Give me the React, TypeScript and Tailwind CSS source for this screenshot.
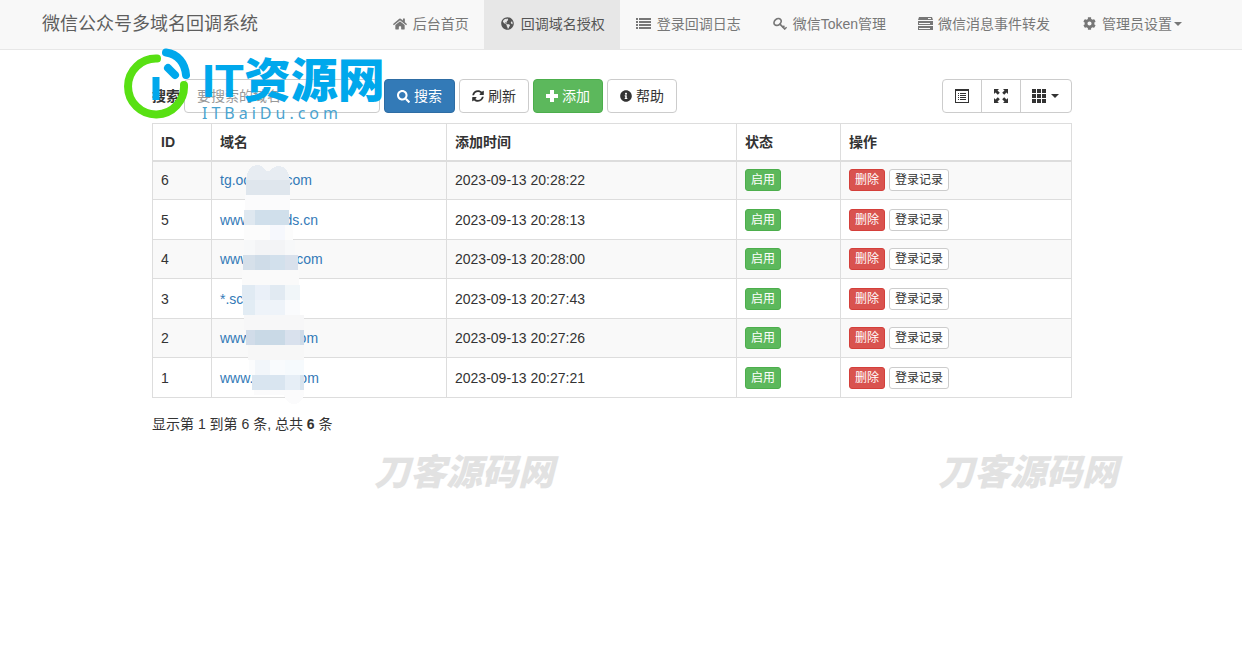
import React from 'react';
import { FaCog, FaGlobeAmericas, FaHome, FaInfoCircle, FaSearch, FaSyncAlt } from 'react-icons/fa';

interface DomainRow {
  id: number;
  domain: string;
  addTime: string;
}

const rows: DomainRow[] = [
  { id: 6, domain: 'tg.ocaaaa.com', addTime: '2023-09-13 20:28:22' },
  { id: 5, domain: 'www.xxxxids.cn', addTime: '2023-09-13 20:28:13' },
  { id: 4, domain: 'www.aaaaa.com', addTime: '2023-09-13 20:28:00' },
  { id: 3, domain: '*.scaaa.com', addTime: '2023-09-13 20:27:43' },
  { id: 2, domain: 'www.aaaai.com', addTime: '2023-09-13 20:27:26' },
  { id: 1, domain: 'www.aaaat.com', addTime: '2023-09-13 20:27:21' },
];

// x, y, width, height, colour
const mosaic: [number, number, number, number, string][] = [
  [4, 15, 44, 15, '#dfe6ed'],
  [3, 30, 45, 15, '#fbfbfc'],
  [2, 45, 11, 15, '#dfe8f0'],
  [13, 45, 34, 15, '#d0dfeb'],
  [2, 60, 49, 15, '#fcfcfc'],
  [28, 60, 15, 15, '#f6f8fd'],
  [2, 75, 51, 15, '#f7f8f9'],
  [13, 75, 30, 15, '#f3f4f6'],
  [1, 90, 12, 15, '#d6e0ea'],
  [13, 90, 15, 15, '#cfdce8'],
  [28, 90, 15, 15, '#d2e0ec'],
  [43, 90, 13, 15, '#d9e1ec'],
  [0, 105, 57, 15, '#fafafa'],
  [0, 120, 13, 15, '#e0eaf3'],
  [13, 120, 15, 15, '#eaf0f8'],
  [28, 120, 15, 15, '#e1eaf2'],
  [43, 120, 15, 15, '#f1f6f9'],
  [1, 135, 12, 15, '#e2ecf4'],
  [13, 135, 30, 15, '#eef3f9'],
  [43, 135, 15, 15, '#fafbfd'],
  [2, 150, 60, 15, '#f7f7f8'],
  [4, 165, 9, 15, '#d1dce9'],
  [13, 165, 30, 15, '#c9d9e6'],
  [43, 165, 15, 15, '#d9e1ed'],
  [58, 165, 4, 15, '#cfdbe8'],
  [6, 180, 56, 15, '#f7f7f7'],
  [7, 195, 6, 15, '#fbfcfd'],
  [13, 195, 15, 15, '#f2f6fa'],
  [28, 195, 15, 15, '#f9fbfd'],
  [43, 195, 19, 15, '#f6fafd'],
  [10, 210, 33, 15, '#d9e5f0'],
  [43, 210, 15, 15, '#e6eef6'],
  [58, 210, 4, 15, '#d8e4ee'],
  [12, 225, 50, 5, '#fbfbfc'],
];

const ListIcon = () => (
  <svg width="15" height="12" viewBox="0 0 15 12" fill="currentColor">
    <path d="M0 0h2v2H0zM3 0h12v2H3zM0 3h2v2H0zM3 3h12v2H3zM0 6h2v2H0zM3 6h12v2H3zM0 9h2v2H0zM3 9h12v2H3z" />
  </svg>
);

const KeyIcon = () => (
  <svg width="14" height="14" viewBox="0 0 14 14" fill="none" stroke="currentColor">
    <ellipse cx="4.6" cy="5" rx="3.9" ry="3" strokeWidth="1.7" transform="rotate(-40 4.6 5)" />
    <path d="M6.6 6.8l5.400 5.400" strokeWidth="1.7" />
    <path d="M9.600 10.600l1.800-1.800M11.300 12.500l2.300-2.300" strokeWidth="1.500" />
  </svg>
);

const ServerIcon = () => (
  <svg width="15" height="13" viewBox="0 0 15 13" fill="currentColor" fillRule="evenodd">
    <path d="M1 0h13l1 3H0zM10 1v1h3V1zM0 4h15v4H0zM1 6v1h11V6zM0 9h15v4H0zM1 11v1h11v-1z" />
  </svg>
);

const PlusIcon = () => (
  <svg width="12" height="12" viewBox="0 0 12 12" fill="currentColor">
    <path d="M4 0h4v4h4v4H8v4H4V8H0V4h4z" />
  </svg>
);

const ToggleIcon = () => (
  <svg width="14" height="14" viewBox="0 0 14 14" fill="currentColor" fillRule="evenodd">
    <path d="M0 0h14v14H0zM1 2v11h12V2z" />
    <path d="M3 4h1v1H3zM5 4h6v1H5zM3 6h1v1H3zM5 6h6v1H5zM3 8h1v1H3zM5 8h6v1H5zM3 10h1v1H3zM5 10h6v1H5z" />
  </svg>
);

const FullscreenIcon = () => (
  <svg width="14" height="14" viewBox="0 0 14 14" fill="currentColor">
    <path d="M0 0h5L3.500 1.500l2.300 2.300-2 2L1.500 3.500 0 5zM14 0v5l-1.500-1.500-2.300 2.300-2-2 2.300-2.300L9 0zM0 14V9l1.500 1.500 2.300-2.300 2 2-2.300 2.300L5 14zM14 14H9l1.500-1.500-2.300-2.300 2-2 2.300 2.300L14 9z" />
  </svg>
);

const GridIcon = () => (
  <svg width="14" height="14" viewBox="0 0 14 14" fill="currentColor">
    <path d="M0 0h4v4H0zM5 0h4v4H5zM10 0h4v4h-4zM0 5h4v4H0zM5 5h4v4H5zM10 5h4v4h-4zM0 10h4v4H0zM5 10h4v4H5zM10 10h4v4h-4z" />
  </svg>
);

const Caret = () => (
  <svg width="8" height="4" viewBox="0 0 8 4" fill="currentColor">
    <path d="M0 0h8L4 4z" />
  </svg>
);

const navItems = [
  { label: '后台首页', icon: <FaHome size={14} /> },
  { label: '回调域名授权', icon: <FaGlobeAmericas size={13} />, active: true },
  { label: '登录回调日志', icon: <ListIcon /> },
  { label: '微信Token管理', icon: <KeyIcon /> },
  { label: '微信消息事件转发', icon: <ServerIcon /> },
  { label: '管理员设置', icon: <FaCog size={13} />, dropdown: true },
];

const Navbar: React.FC = () => (
  <nav className="border-b border-[#e7e7e7] bg-[#f8f8f8] pr-[18px]">
    <div className="mx-auto flex max-w-[1170px] items-stretch justify-between">
      <a href="#" className="px-[15px] pt-[14px] text-lg leading-[21px] whitespace-nowrap text-[#5e5e5e]">
        微信公众号多域名回调系统
      </a>
      <ul className="flex">
        {navItems.map((item) => (
          <li key={item.label}>
            <a
              href="#"
              className={
                item.active
                  ? 'flex h-[49px] items-center bg-[#e7e7e7] px-[15px] pb-0.5 whitespace-nowrap text-[#555]'
                  : 'flex h-[49px] items-center px-[15px] pb-0.5 whitespace-nowrap text-[#777]'
              }
            >
              <span className="mr-1 flex w-[18px] justify-center">{item.icon}</span>
              <span className={item.dropdown ? 'mr-0.5' : ''}>{item.label}</span>
              {item.dropdown && <Caret />}
            </a>
          </li>
        ))}
      </ul>
    </div>
  </nav>
);

const Toolbar: React.FC = () => (
  <div className="flex items-center justify-between">
    <form className="flex items-center gap-1">
      <label htmlFor="kw" className="font-bold whitespace-nowrap">搜索</label>
      <input
        id="kw"
        type="text"
        placeholder="要搜索的域名"
        className="h-[34px] w-[196px] rounded border border-[#ccc] bg-white px-3 placeholder:text-[#999]"
      />
      <button type="button" className="flex h-[34px] items-center gap-1 rounded border border-[#2e6da4] bg-[#337ab7] px-3 whitespace-nowrap text-white">
        <FaSearch size={13} />搜索
      </button>
      <button type="button" className="flex h-[34px] items-center gap-1 rounded border border-[#ccc] bg-white px-3 whitespace-nowrap">
        <FaSyncAlt size={12} />刷新
      </button>
      <button type="button" className="flex h-[34px] items-center gap-1 rounded border border-[#4cae4c] bg-[#5cb85c] px-3 whitespace-nowrap text-white">
        <PlusIcon />添加
      </button>
      <button type="button" className="flex h-[34px] items-center gap-1 rounded border border-[#ccc] bg-white px-3 whitespace-nowrap">
        <FaInfoCircle size={12} />帮助
      </button>
    </form>
    <div className="flex h-[34px] divide-x divide-[#ccc] rounded border border-[#ccc]">
      <button type="button" aria-label="切换" className="flex items-center px-3">
        <ToggleIcon />
      </button>
      <button type="button" aria-label="全屏" className="flex items-center px-3">
        <FullscreenIcon />
      </button>
      <button type="button" aria-label="列" className="flex items-center gap-1 pr-3 pl-[11px]">
        <GridIcon />
        <span className="ml-px"><Caret /></span>
      </button>
    </div>
  </div>
);

const DomainTable: React.FC = () => (
  <div className="relative mt-[10px]">
    <table className="w-full table-fixed border-collapse border border-[#ddd] text-left">
      <thead>
        <tr className="h-[37px] border-b-2 border-[#ddd]">
          <th className="w-[59px] border-x border-[#ddd] px-2">ID</th>
          <th className="w-[235px] border-x border-[#ddd] px-2">域名</th>
          <th className="w-[290px] border-x border-[#ddd] px-2">添加时间</th>
          <th className="w-[104px] border-x border-[#ddd] px-2">状态</th>
          <th className="border-x border-[#ddd] px-2">操作</th>
        </tr>
      </thead>
      <tbody>
        {rows.map((row) => (
          <tr key={row.id} className="h-[39px] odd:bg-[#f9f9f9] even:h-[40px]">
            <td className="border border-[#ddd] px-2">{row.id}</td>
            <td className="border border-[#ddd] px-2">
              <a href="#" className="text-[#337ab7]">{row.domain}</a>
            </td>
            <td className="border border-[#ddd] px-2">{row.addTime}</td>
            <td className="border border-[#ddd] px-2">
              <button type="button" className="block h-[22px] rounded-[3px] border border-[#4cae4c] bg-[#5cb85c] px-[5px] text-xs text-white">
                启用
              </button>
            </td>
            <td className="border border-[#ddd] px-2">
              <div className="flex gap-1">
                <button type="button" className="h-[22px] rounded-[3px] border border-[#d43f3a] bg-[#d9534f] px-[5px] text-xs text-white">
                  删除
                </button>
                <button type="button" className="h-[22px] rounded-[3px] border border-[#ccc] bg-white px-[5px] text-xs">
                  登录记录
                </button>
              </div>
            </td>
          </tr>
        ))}
      </tbody>
    </table>
    {/* Mosaic over the domains */}
    <svg className="absolute top-[42px] left-[90px]" width="64" height="240" viewBox="0 0 64 240" shapeRendering="crispEdges">
      <path d="M4 15C5 4 10 0 15 0c5 0 7 3 9 6h4c2-3 5-5 9-5 6 0 10 5 11 14z" fill="#e7ecf2" />
      <circle cx="52" cy="229" r="10" fill="#fbfbfc" />
      {mosaic.map(([x, y, w, h, fill]) => (
        <rect key={`${x}-${y}`} x={x} y={y} width={w} height={h} fill={fill} />
      ))}
    </svg>
  </div>
);

const SiteLogo: React.FC = () => (
  <div className="pointer-events-none absolute top-[46px] left-[124px] flex gap-3 text-[#00a8ec]">
    <svg width="66" height="74" viewBox="0 0 66 74" fill="none" strokeLinecap="round">
      <path d="M33 12.500A28 28 0 1 0 60 39" stroke="#58e013" strokeWidth="8" />
      <path d="M42 6.500C54 8 61 17 62 29" stroke="#00a8ec" strokeWidth="8" />
      <path d="M44 22l7 7" stroke="#00a8ec" strokeWidth="8" />
      <path d="M32 31v23" stroke="#00a8ec" strokeWidth="7" strokeLinecap="butt" />
    </svg>
    <div className="pt-3 whitespace-nowrap">
      <div className="text-[47px] leading-[46px] font-black">IT资源网</div>
      <div className="font-['Noto_Sans',sans-serif] text-base leading-[18px] tracking-[4px] text-[#4aa3cf]">ITBaiDu.com</div>
    </div>
  </div>
);

const App: React.FC = () => {
  return (
    <div className="relative min-h-screen bg-white font-['Liberation_Sans','Noto_Sans_CJK_SC',sans-serif] text-sm text-[#333]">
      <Navbar />
      <main className="pr-[18px]">
        <div className="mx-auto max-w-[920px] pt-[29px]">
          <Toolbar />
          <DomainTable />
          <p className="mt-4">
            显示第 1 到第 6 条, 总共 <b>6</b> 条
          </p>
        </div>
      </main>
      <SiteLogo />
      <div className="pointer-events-none absolute top-[455px] left-[374px] text-4xl leading-9 font-black whitespace-nowrap text-[#e2e2e2] italic">
        刀客源码网
      </div>
      <div className="pointer-events-none absolute top-[455px] left-[938px] text-4xl leading-9 font-black whitespace-nowrap text-[#e2e2e2] italic">
        刀客源码网
      </div>
    </div>
  );
};

export default App;
